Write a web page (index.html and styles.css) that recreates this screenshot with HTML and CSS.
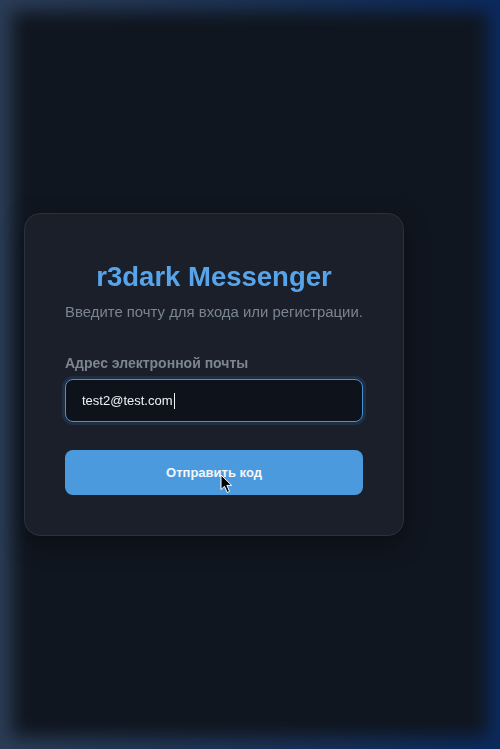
FILE: index.html
```html
<!DOCTYPE html>
<html lang="ru">
<head>
    <meta charset="UTF-8">
    <meta name="viewport" content="width=device-width, initial-scale=1.0">
    <title>r3dark Messenger</title>
    <link rel="stylesheet" href="styles.css">
</head>
<body>
    <div class="page">
        <div class="auth-card">
            <h1 class="title">r3dark Messenger</h1>
            <p class="subtitle">Введите почту для входа или регистрации.</p>
            <label class="field-label" for="email">Адрес электронной почты</label>
            <div class="input-box">
                <span class="input-text">test2@test.com</span><span class="caret"></span>
            </div>
            <button class="submit-btn">
                Отправить код
                <svg class="pointer" width="13" height="20" viewBox="0 0 13 20">
                    <path d="M1 1 L1 15.5 L4.5 12.3 L7.2 18.5 L9.6 17.4 L6.9 11.4 L11.6 11.4 Z" fill="#000" stroke="#fff" stroke-width="1"/>
                </svg>
            </button>
        </div>
    </div>
</body>
</html>
```

FILE: styles.css
```css
html {
    background: linear-gradient(90deg, #2b3d56 0%, #1c3356 50%, #0a2a60 100%);
}
body {
    margin: 0;
    font-family: 'Liberation Sans', Arial, sans-serif;
    position: relative;
}
/* dark layer with soft blurred edges over the glow */
body::before {
    content: "";
    position: fixed;
    top: 11px;
    left: 12px;
    right: 12px;
    bottom: 12px;
    background: #10161f;
    filter: blur(9px);
    z-index: -1;
}
.page {
    min-height: 749px;
    display: flex;
    align-items: center;
    padding-left: 24px;
    box-sizing: border-box;
}
.auth-card {
    width: 380px;
    box-sizing: border-box;
    padding: 43px 40px 40px;
    background: #1a1f29;
    border: 1px solid #2c323d;
    border-radius: 16px;
    box-shadow: 0 8px 24px rgba(0, 0, 0, 0.35);
    display: flex;
    flex-direction: column;
}
.title {
    margin: 0;
    text-align: center;
    color: #58a4ea;
    font-size: 27.5px;
    font-weight: 700;
    line-height: 40px;
}
.subtitle {
    margin: 4px 0 0;
    text-align: center;
    white-space: nowrap;
    color: #7a8592;
    font-size: 14.9px;
    line-height: 22px;
}
.field-label {
    margin-top: 30px;
    color: #7c8591;
    font-size: 14px;
    font-weight: 700;
    line-height: 20px;
}
.input-box {
    margin-top: 6px;
    height: 43px;
    box-sizing: border-box;
    border: 1px solid #4a8fd2;
    border-radius: 8px;
    background: #0e131b;
    box-shadow: 0 0 0 3px rgba(48, 100, 160, 0.22);
    display: flex;
    align-items: center;
    padding-left: 16px;
}
.input-text {
    color: #eef2f6;
    font-size: 13px;
}
.caret {
    width: 1px;
    height: 16px;
    background: #eef2f6;
    margin-left: 1px;
}
.submit-btn {
    position: relative;
    margin-top: 28px;
    height: 45px;
    border: none;
    border-radius: 8px;
    background: #4c9ade;
    color: #f4f7fb;
    font-family: inherit;
    font-size: 13px;
    font-weight: 700;
    cursor: pointer;
}
.pointer {
    position: absolute;
    left: 155px;
    top: 24px;
}
```
